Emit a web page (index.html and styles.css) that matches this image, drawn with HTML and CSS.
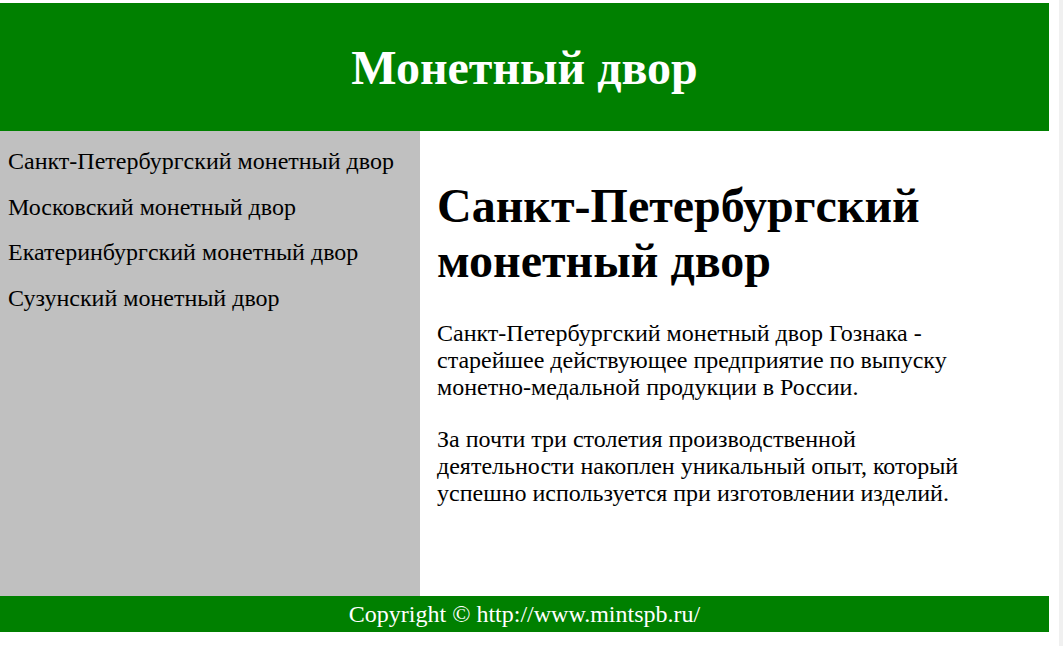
FILE: index.html
```html
<!DOCTYPE html>
<html lang="ru">
<head>
<meta charset="utf-8">
<title>Монетный двор</title>
<link rel="stylesheet" href="styles.css">
</head>
<body>
<div class="page">
  <header class="site-header">
    <h1 class="site-title">Монетный двор</h1>
  </header>
  <div class="layout">
    <nav class="sidebar">
      <p class="nav-item">Санкт-Петербургский монетный двор</p>
      <p class="nav-item">Московский монетный двор</p>
      <p class="nav-item">Екатеринбургский монетный двор</p>
      <p class="nav-item">Сузунский монетный двор</p>
    </nav>
    <main class="content">
      <h2 class="content-title">Санкт-Петербургский монетный двор</h2>
      <p class="content-text">Санкт-Петербургский монетный двор Гознака - старейшее действующее предприятие по выпуску монетно-медальной продукции в России.</p>
      <p class="content-text">За почти три столетия производственной деятельности накоплен уникальный опыт, который успешно используется при изготовлении изделий.</p>
    </main>
  </div>
  <footer class="site-footer">Copyright © http://www.mintspb.ru/</footer>
</div>
<div class="edge"></div>
</body>
</html>
```

FILE: styles.css
```css
html, body {
  margin: 0;
  padding: 0;
  background: #ffffff;
}
body {
  display: flex;
  align-items: stretch;
  min-height: 646px;
  font-family: "Liberation Serif", "Times New Roman", serif;
  color: #000;
}
.page {
  width: 1049px;
  padding-top: 3px;
}
.site-header {
  background: #008000;
  height: 128px;
  display: flex;
  align-items: center;
  justify-content: center;
}
.site-title {
  margin: 0;
  color: #ffffff;
  font-size: 48px;
  font-weight: bold;
}
.layout {
  display: flex;
  height: 465px;
}
.sidebar {
  width: 420px;
  flex: none;
  background: #c0c0c0;
  padding: 17px 0 0 8px;
  box-sizing: border-box;
}
.nav-item {
  margin: 0 0 18px;
  font-size: 24px;
  line-height: 27.5px;
}
.content {
  flex: 1;
  padding: 0 80px 0 17px;
}
.content-title {
  font-size: 48px;
  font-weight: bold;
  margin: 47px 0 32px;
}
.content-text {
  font-size: 24px;
  line-height: 27px;
  margin: 0 0 25px;
}
.site-footer {
  background: #008000;
  color: #ffffff;
  height: 36px;
  font-size: 24px;
  display: flex;
  align-items: center;
  justify-content: center;
}
.edge {
  width: 4px;
  margin-left: 10px;
  background: #f0f0f0;
}
```
